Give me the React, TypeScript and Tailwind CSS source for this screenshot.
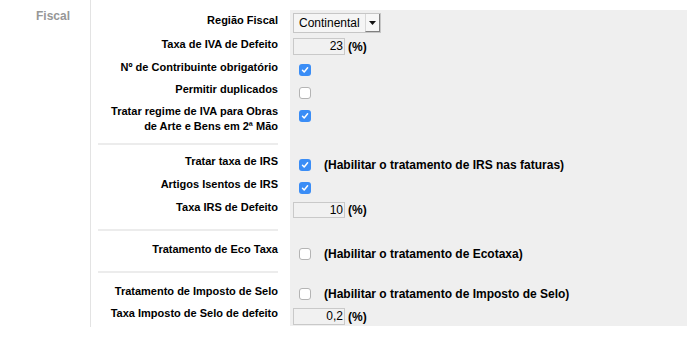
import React from 'react';

const Check: React.FC<{ on?: boolean }> = ({ on }) =>
  on ? (
    <span className="flex h-[12px] w-[12px] items-center justify-center rounded-[3px] bg-[#3a8df6]">
      <svg width="8" height="8" viewBox="0 0 8 8" fill="none">
        <path d="M1.5 4.3 L3.2 6 L6.6 1.8" stroke="white" strokeWidth="1.5" strokeLinecap="round" strokeLinejoin="round" />
      </svg>
    </span>
  ) : (
    <span className="block h-[12px] w-[12px] rounded-[3px] border border-[#b4b4b4] bg-white" />
  );

const NumInput: React.FC<{ value: string; h: string }> = ({ value, h }) => (
  <div className="flex items-center">
    <div className={`${h} w-[52px] border border-[#c9c9c9] bg-[#f1f1f1] pr-[1px] text-right text-[12px] leading-[14px] text-black`}>
      {value}
    </div>
    <span className="ml-[3px] text-[12px] font-bold leading-[14px] text-black">(%)</span>
  </div>
);

const Note: React.FC<{ children: React.ReactNode }> = ({ children }) => (
  <span className="ml-[13px] text-[12px] font-bold leading-[12px] text-black">{children}</span>
);

const Row: React.FC<{
  label: React.ReactNode;
  h: string;
  lp: string;
  vp: string;
  children?: React.ReactNode;
}> = ({ label, h, lp, vp, children }) => (
  <div className={`flex ${h}`}>
    <div className={`w-[180px] shrink-0 text-right text-[11px] font-bold leading-[14px] text-black ${lp}`}>{label}</div>
    <div className={`ml-[12px] flex-1 bg-[#efefef] pl-[3px] ${vp}`}>{children}</div>
  </div>
);

const Sep: React.FC<{ pb: string }> = ({ pb }) => (
  <div className="flex">
    <div className={`w-[180px] shrink-0 pt-[8px] ${pb}`}>
      <div className="h-[2px] bg-[#ececec]" />
    </div>
    <div className="ml-[12px] flex-1 bg-[#efefef]" />
  </div>
);

export default function App() {
  return (
    <div className="flex h-[341px] w-[700px] bg-white font-['Liberation_Sans',Arial,sans-serif]">
      <div className="w-[90px] shrink-0 pr-[20px] pt-[9px] text-right text-[12px] font-bold leading-[14px] text-[#979797]">
        Fiscal
      </div>
      <div className="h-[327px] flex-1 border-l border-[#e3e3e3] pl-[7px] pr-[13px] pt-[10px]">
        <Row label="Região Fiscal" h="h-[25px]" lp="pt-[3px]" vp="pt-[3px]">
          <div className="flex h-[20px] w-[88px] items-center border border-[#c6c6c6] bg-[#f5f5f5]">
            <span className="flex-1 pl-[5px] text-[12px] leading-[14px] text-black">Continental</span>
            <div className="flex h-[18px] w-[15px] items-center justify-center border-b border-l border-r border-b-[#808080] border-l-[#d8d8d8] border-r-[#808080] bg-[#f7f7f7]">
              <svg width="7" height="4" viewBox="0 0 7 4">
                <path d="M0 0 H7 L3.5 4 Z" fill="#111" />
              </svg>
            </div>
          </div>
        </Row>
        <Row label="Taxa de IVA de Defeito" h="h-[23px]" lp="pt-[2px]" vp="pt-[3px]">
          <NumInput value="23" h="h-[17px]" />
        </Row>
        <Row label="Nº de Contribuinte obrigatório" h="h-[23px]" lp="pt-[2px]" vp="pt-[6px] pl-[9px]">
          <Check on />
        </Row>
        <Row label="Permitir duplicados" h="h-[23px]" lp="pt-[1px]" vp="pt-[6px] pl-[9px]">
          <Check />
        </Row>
        <Row
          label={
            <span className="block leading-[15px]">
              Tratar regime de IVA para Obras
              <br />
              de Arte e Bens em 2ª Mão
            </span>
          }
          h="h-[31px]"
          lp="pt-0"
          vp="pt-[6px] pl-[9px]"
        >
          <Check on />
        </Row>
        <Sep pb="pb-[7px]" />
        <Row label="Tratar taxa de IRS" h="h-[23px]" lp="pt-[2px]" vp="pt-[7px] pl-[9px]">
          <div className="flex items-center">
            <Check on />
            <Note>(Habilitar o tratamento de IRS nas faturas)</Note>
          </div>
        </Row>
        <Row label="Artigos Isentos de IRS" h="h-[23px]" lp="pt-[2px]" vp="pt-[7px] pl-[9px]">
          <Check on />
        </Row>
        <Row label="Taxa IRS de Defeito" h="h-[23px]" lp="pt-[2px]" vp="pt-[4px]">
          <NumInput value="10" h="h-[16px]" />
        </Row>
        <Sep pb="pb-[9px]" />
        <Row label="Tratamento de Eco Taxa" h="h-[23px]" lp="pt-[2px]" vp="pt-[8px] pl-[9px]">
          <div className="flex items-center">
            <Check />
            <Note>(Habilitar o tratamento de Ecotaxa)</Note>
          </div>
        </Row>
        <Sep pb="pb-[9px]" />
        <Row label="Tratamento de Imposto de Selo" h="h-[23px]" lp="pt-[2px]" vp="pt-[6px] pl-[9px]">
          <div className="flex items-center">
            <Check />
            <Note>(Habilitar o tratamento de Imposto de Selo)</Note>
          </div>
        </Row>
        <Row label="Taxa Imposto de Selo de defeito" h="h-[21px]" lp="pt-[1px]" vp="pt-[3px]">
          <NumInput value="0,2" h="h-[17px]" />
        </Row>
      </div>
    </div>
  );
}
